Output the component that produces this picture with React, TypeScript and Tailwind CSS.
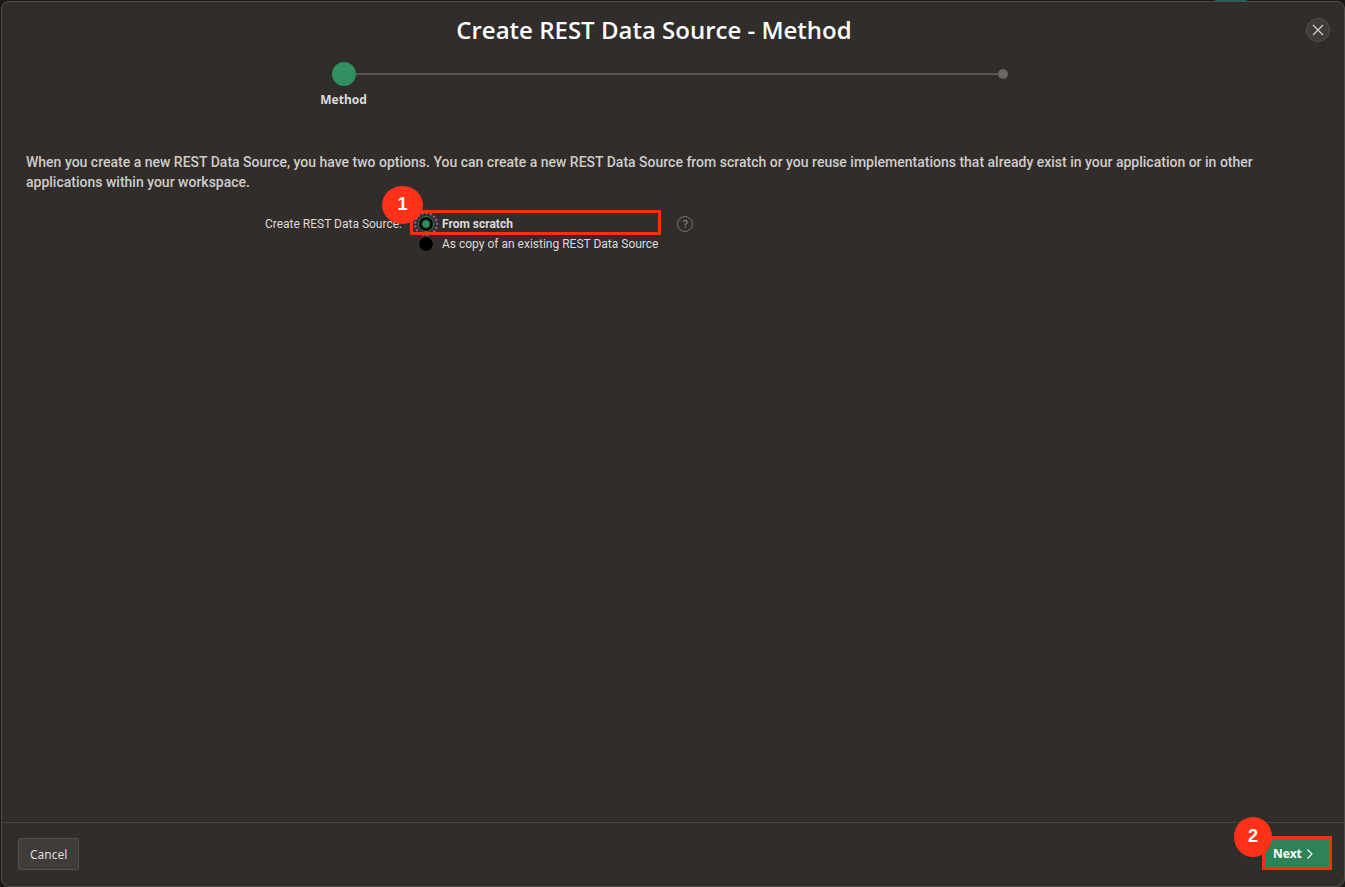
import React, { useState } from "react";

const options = [
  { id: "scratch", label: "From scratch" },
  { id: "copy", label: "As copy of an existing REST Data Source" },
];

function Callout({ children, className }: { children: React.ReactNode; className: string }) {
  return (
    <span
      className={`absolute z-10 flex items-center justify-center rounded-[50%] bg-[#ff3119] pb-0.5 font-['Liberation_Sans',sans-serif] text-lg font-bold text-white ${className}`}
    >
      {children}
    </span>
  );
}

function Header() {
  return (
    <header className="flex h-14 items-center pr-[14px]">
      <h1 className="flex-1 text-center font-['Open_Sans','Noto_Sans',sans-serif] text-2xl font-semibold text-white">
        Create REST Data Source - Method
      </h1>
      <button
        type="button"
        aria-label="Close"
        className="flex size-6 items-center justify-center rounded-full border border-[#55514c] bg-[#403c38] text-[#d8d5d2]"
      >
        <svg viewBox="0 0 12 12" className="size-3" fill="none" stroke="currentColor" strokeWidth="1.1">
          <path d="M1 1 11 11M11 1 1 11" />
        </svg>
      </button>
    </header>
  );
}

function Steps() {
  return (
    <ol className="flex px-3 pt-1 font-['Noto_Sans','Open_Sans',sans-serif] text-xs font-bold">
      <li className="flex-1" aria-current="step">
        <div className="flex h-6 items-center">
          <span className="flex-1" />
          <span className="size-6 rounded-full bg-[#318f60]" />
          <span className="h-0.5 flex-1 bg-[#5b5750]" />
        </div>
        <p className="mt-1 text-center leading-5">Method</p>
      </li>
      <li className="flex-1">
        <div className="flex h-6 items-center">
          <span className="h-0.5 flex-1 bg-[#5b5750]" />
          <span className="size-2.5 rounded-full bg-[#6b6662]" />
          <span className="flex-1" />
        </div>
      </li>
    </ol>
  );
}

function SourceField() {
  const [selected, setSelected] = useState("scratch");
  return (
    <div className="flex items-start pt-[18px] text-xs leading-5">
      <div id="source-label" className="w-96 shrink-0 pt-1 pr-2 text-right">
        Create REST Data Source:
      </div>
      <div role="radiogroup" aria-labelledby="source-label" className="relative pt-1 pr-[3px]">
        {options.map((o) => (
          <label key={o.id} htmlFor={o.id} className="flex h-5 items-center gap-2 pl-2">
            <input
              id={o.id}
              type="radio"
              name="source"
              checked={selected === o.id}
              onChange={() => setSelected(o.id)}
              className="peer size-4 appearance-none rounded-full border border-[#3d3935] bg-black outline-offset-2 checked:border-[#2f8a5c] checked:bg-[radial-gradient(circle,#318f60_3px,#000_5px)] checked:outline-2 checked:outline-dotted checked:outline-[#a85cab]"
            />
            <span className="peer-checked:font-bold">{o.label}</span>
          </label>
        ))}
        <span className="pointer-events-none absolute inset-x-0 top-0 h-[25px] border-[3px] border-[#f5300f]" />
        <Callout className="-top-6 -left-7 h-[38px] w-[41px]">1</Callout>
      </div>
      <button
        type="button"
        aria-label="Help"
        className="mt-1.5 ml-4 flex size-4 items-center justify-center rounded-full border border-[#77736f] text-[11px] leading-none text-[#96928e]"
      >
        ?
      </button>
    </div>
  );
}

function Footer() {
  return (
    <footer className="flex items-end justify-between border-t border-[#46423c] pt-[13px] pr-3 pb-4 pl-4 font-['Noto_Sans','Open_Sans',sans-serif] text-xs">
      <button type="button" className="h-8 rounded-xs border border-[#55514c] bg-[#403c38] px-[11px] pt-px">
        Cancel
      </button>
      <div className="relative">
        <button
          type="button"
          className="flex h-[34px] w-[70px] items-center gap-1 border-[3px] border-[#f5300f] bg-[#2d8257] pt-0.5 pl-2 font-bold text-white"
        >
          Next
          <svg viewBox="0 0 8 12" className="h-3 w-2" fill="none" stroke="currentColor" strokeWidth="1.1">
            <path d="M1.5 1.5 6 6 1.5 10.5" />
          </svg>
        </button>
        <Callout className="-top-[19px] -left-7 h-10 w-[38px]">2</Callout>
      </div>
    </footer>
  );
}

export default function App() {
  return (
    <div className="flex min-h-screen bg-[#1c1a18] pt-px pl-px font-['Roboto',sans-serif] text-[#dedbd8]">
      <div aria-hidden="true" className="absolute top-0 right-[98px] h-px w-8 bg-[#17626f]" />
      <div role="dialog" className="relative flex flex-1 flex-col rounded-lg border border-[#504c48] bg-[#312d2a]">
        <Header />
        <Steps />
        <main className="flex-1 px-6 pt-[42px]">
          <p className="text-sm leading-5 font-medium text-[#cfccc9]">
            When you create a new REST Data Source, you have two options. You can create a new REST Data Source from
            scratch or you reuse implementations that already exist in your application or in other applications within
            your workspace.
          </p>
          <SourceField />
        </main>
        <Footer />
        <svg aria-hidden="true" viewBox="0 0 10 10" className="absolute right-0 bottom-0 size-2" stroke="#57534f">
          <path d="M1 10 10 1M5 10 10 5" />
        </svg>
      </div>
    </div>
  );
}
